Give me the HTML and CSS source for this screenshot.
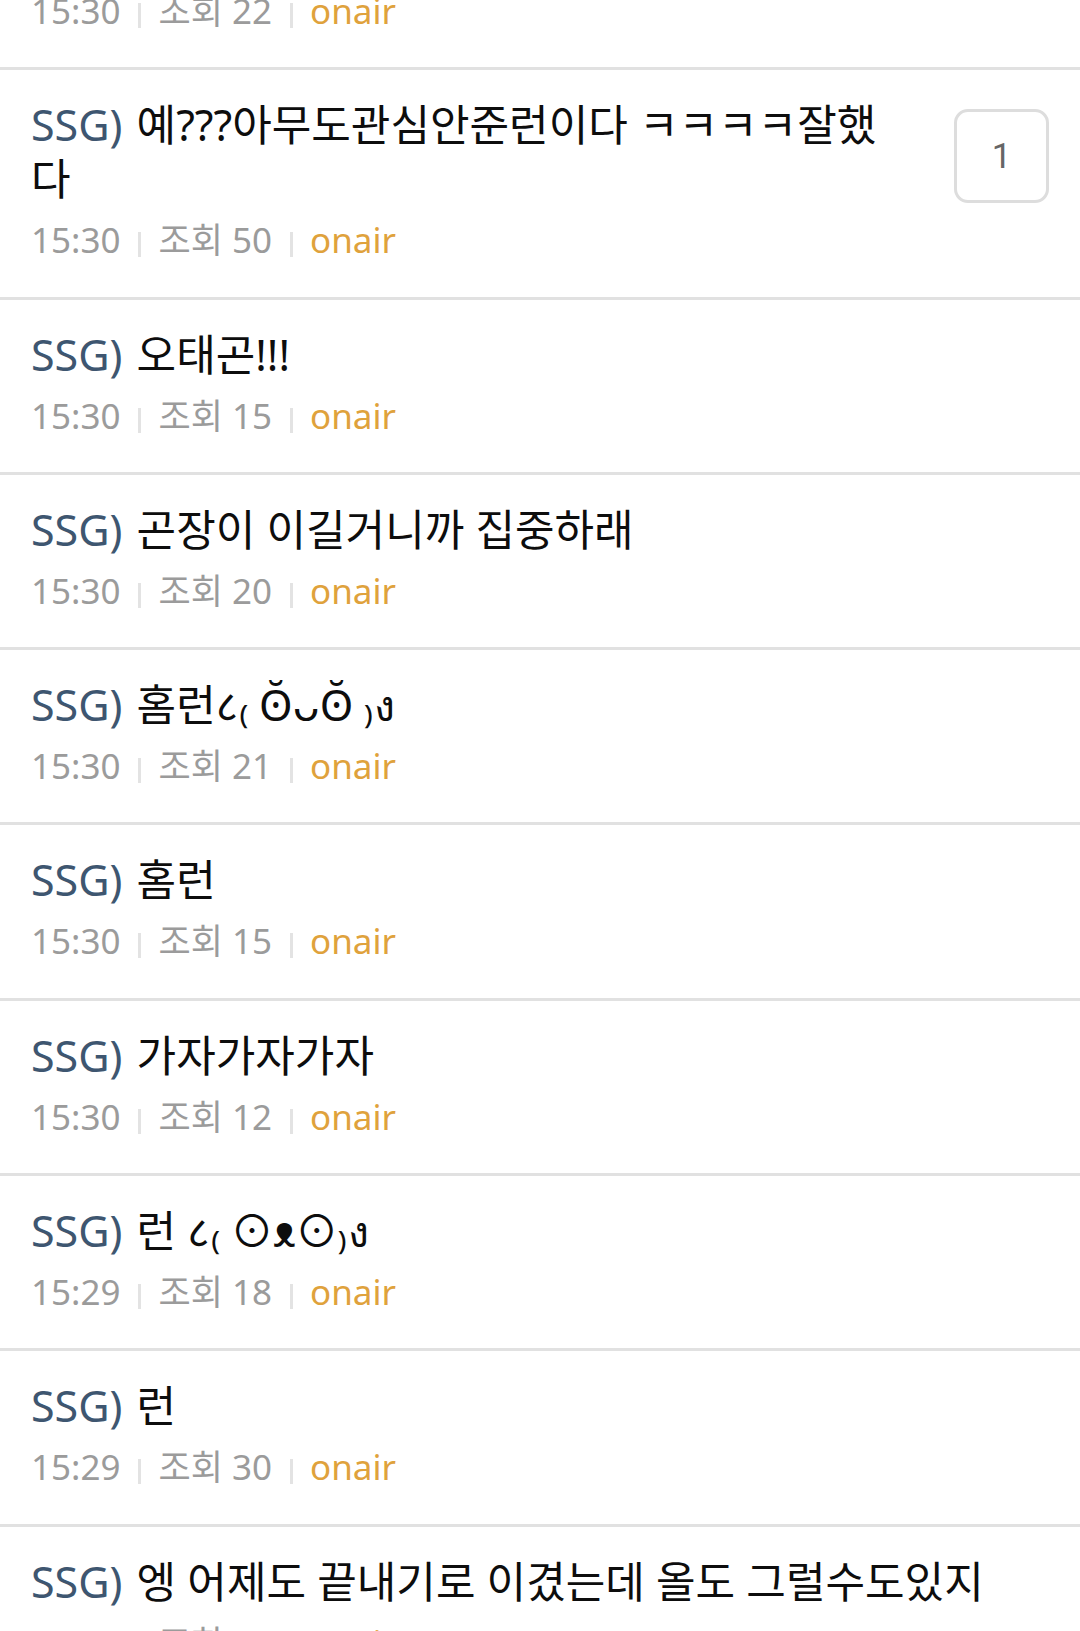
FILE: index.html
```html
<!DOCTYPE html>
<html lang="ko">
<head>
<meta charset="utf-8">
<title>게시판</title>
<link rel="stylesheet" href="styles.css">
</head>
<body>
<ul class="list">
  <li class="item">
    <div class="body">
      <p class="title"><span class="tag">SSG)</span> 가보자</p>
      <div class="meta"><span class="time">15:30</span><span class="views">조회 22</span><span class="src">onair</span></div>
    </div>
  </li>
  <li class="item">
    <div class="body">
      <p class="title"><span class="tag">SSG)</span> 예???아무도관심안준런이다 ㅋㅋㅋㅋ잘했다</p>
      <div class="meta"><span class="time">15:30</span><span class="views">조회 50</span><span class="src">onair</span></div>
    </div>
    <span class="badge">1</span>
  </li>
  <li class="item">
    <div class="body">
      <p class="title"><span class="tag">SSG)</span> 오태곤!!!</p>
      <div class="meta"><span class="time">15:30</span><span class="views">조회 15</span><span class="src">onair</span></div>
    </div>
  </li>
  <li class="item">
    <div class="body">
      <p class="title"><span class="tag">SSG)</span> 곤장이 이길거니까 집중하래</p>
      <div class="meta"><span class="time">15:30</span><span class="views">조회 20</span><span class="src">onair</span></div>
    </div>
  </li>
  <li class="item">
    <div class="body">
      <p class="title"><span class="tag">SSG)</span> 홈런८₍ ʘ̆ᴗʘ̆ ₎ง</p>
      <div class="meta"><span class="time">15:30</span><span class="views">조회 21</span><span class="src">onair</span></div>
    </div>
  </li>
  <li class="item">
    <div class="body">
      <p class="title"><span class="tag">SSG)</span> 홈런</p>
      <div class="meta"><span class="time">15:30</span><span class="views">조회 15</span><span class="src">onair</span></div>
    </div>
  </li>
  <li class="item">
    <div class="body">
      <p class="title"><span class="tag">SSG)</span> 가자가자가자</p>
      <div class="meta"><span class="time">15:30</span><span class="views">조회 12</span><span class="src">onair</span></div>
    </div>
  </li>
  <li class="item">
    <div class="body">
      <p class="title"><span class="tag">SSG)</span> 런 ८₍ ⊙ᴥ⊙₎ง</p>
      <div class="meta"><span class="time">15:29</span><span class="views">조회 18</span><span class="src">onair</span></div>
    </div>
  </li>
  <li class="item">
    <div class="body">
      <p class="title"><span class="tag">SSG)</span> 런</p>
      <div class="meta"><span class="time">15:29</span><span class="views">조회 30</span><span class="src">onair</span></div>
    </div>
  </li>
  <li class="item">
    <div class="body">
      <p class="title"><span class="tag">SSG)</span> 엥 어제도 끝내기로 이겼는데 올도 그럴수도있지</p>
      <div class="meta"><span class="time">15:29</span><span class="views">조회 13</span><span class="src">onair</span></div>
    </div>
  </li>
</ul>
</body>
</html>
```
FILE: styles.css
```css
html, body {
  margin: 0;
  padding: 0;
  background: #ffffff;
}

body {
  font-family: "Noto Sans", "Noto Sans CJK KR", sans-serif;
  overflow: hidden;
}

.list {
  list-style: none;
  margin: -105px 0 0 0;
  padding: 0;
}

.item {
  display: flex;
  align-items: flex-start;
  gap: 58px;
  padding: 28px 31px 23.3px 31px;
  border-bottom: 3px solid #e1e1e1;
}

.body {
  flex: 1;
  min-width: 0;
}

.title {
  margin: 0;
  font-size: 43px;
  line-height: 54px;
  color: #0d0d0d;
}

.tag {
  color: #3e5670;
  margin-right: 3px;
}

.meta {
  display: flex;
  align-items: center;
  height: 67px;
  font-size: 35px;
  line-height: 67px;
  color: #9b9b9b;
  white-space: nowrap;
}

.meta > span + span::before {
  content: "";
  display: inline-block;
  width: 3px;
  height: 25px;
  margin: 0 17px 0 18px;
  background: #e3e3e3;
  vertical-align: -4px;
}

.src {
  color: #dfa23c;
}

.badge {
  flex: none;
  box-sizing: border-box;
  width: 95px;
  height: 94px;
  margin-top: 11px;
  border: 3px solid #dddddd;
  border-radius: 14px;
  display: flex;
  align-items: center;
  justify-content: center;
  font-family: Roboto, "Noto Sans", sans-serif;
  font-size: 35px;
  color: #666666;
}
```
